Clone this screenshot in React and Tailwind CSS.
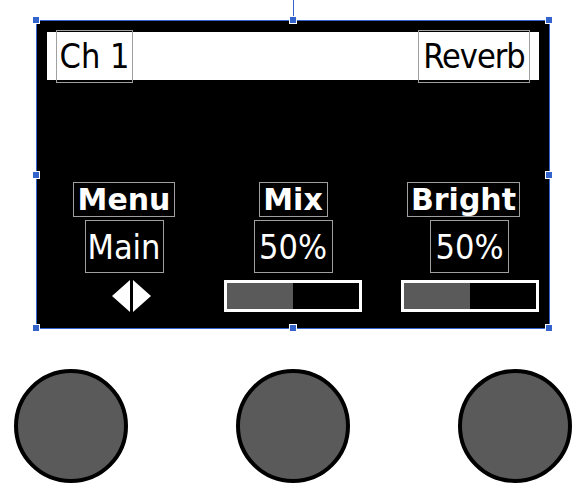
import React from 'react';

const condensed = { fontFamily: '"DejaVu Sans Condensed", "DejaVu Sans", sans-serif', fontStretch: 'condensed' };

const Handle = ({ className }) => (
  <div className={`absolute w-[8px] h-[8px] bg-[#3463cc] border border-white ${className}`} />
);

const Label = ({ children, className = '' }) => (
  <div
    className={`h-[35px] flex items-center justify-center border border-[#a0a0a0] text-white font-bold text-[30px] leading-none font-['DejaVu_Sans',sans-serif] ${className}`}
  >
    {children}
  </div>
);

const Value = ({ children }) => (
  <div
    className="mt-[3px] w-[79px] h-[53px] flex items-center justify-center border border-[#a0a0a0] text-white text-[34px] leading-none"
    style={condensed}
  >
    {children}
  </div>
);

const Bar = ({ value }) => (
  <div className="mt-[7px] w-[138px] h-[32px] border-[3px] border-white bg-black">
    <div className="h-full bg-[#5a5a5a]" style={{ width: `${value}%` }} />
  </div>
);

const Knob = () => (
  <div className="w-[114px] h-[114px] rounded-full border-4 border-black bg-[#5a5a5a]" />
);

export default function App() {
  return (
    <div className="w-[586px] h-[496px] bg-white overflow-hidden pt-[20px]">
      {/* screen */}
      <div className="relative ml-[36px] w-[514px] h-[309px] border border-[#3463cc] bg-black">
        <div className="absolute left-1/2 -top-[21px] w-px h-[17px] bg-[#3463cc]" />
        <Handle className="-left-[5px] -top-[5px]" />
        <Handle className="left-1/2 -translate-x-1/2 -top-[5px]" />
        <Handle className="-right-[4px] -top-[5px]" />
        <Handle className="-left-[5px] top-1/2 -translate-y-1/2" />
        <Handle className="-right-[4px] top-1/2 -translate-y-1/2" />
        <Handle className="-left-[5px] -bottom-[4px]" />
        <Handle className="left-1/2 -translate-x-1/2 -bottom-[4px]" />
        <Handle className="-right-[4px] -bottom-[4px]" />

        <div className="mt-[11px] mx-[10px] h-[48px] bg-white flex items-center justify-between px-[9px]">
          <div
            className="w-[77px] h-[53px] flex items-center justify-center border border-[#a0a0a0] text-black text-[34px] leading-none"
            style={condensed}
          >
            Ch 1
          </div>
          <div
            className="w-[112px] h-[53px] flex items-center justify-center border border-[#a0a0a0] text-black text-[34px] leading-none tracking-[-1px]"
            style={condensed}
          >
            Reverb
          </div>
        </div>

        <div className="mt-[102px] ml-[18px] flex">
          <div className="w-[138px] flex flex-col items-center">
            <Label className="w-[102px]">Menu</Label>
            <Value>Main</Value>
            <svg className="mt-[7px] ml-[14px]" width="39" height="32" viewBox="0 0 39 32">
              <polygon points="0,16 18,0 18,32" fill="white" />
              <polygon points="21,0 39,16 21,32" fill="white" />
            </svg>
          </div>
          <div className="ml-[31px] w-[138px] flex flex-col items-center">
            <Label className="w-[69px]">Mix</Label>
            <Value>50%</Value>
            <Bar value={50} />
          </div>
          <div className="ml-[38px] w-[139px] flex flex-col items-center">
            <Label className="w-[113px] mr-[12px]">Bright</Label>
            <Value>50%</Value>
            <Bar value={50} />
          </div>
        </div>
      </div>

      {/* knobs */}
      <div className="mt-[40px] pl-[14px] flex gap-[108px]">
        <Knob />
        <Knob />
        <Knob />
      </div>
    </div>
  );
}
